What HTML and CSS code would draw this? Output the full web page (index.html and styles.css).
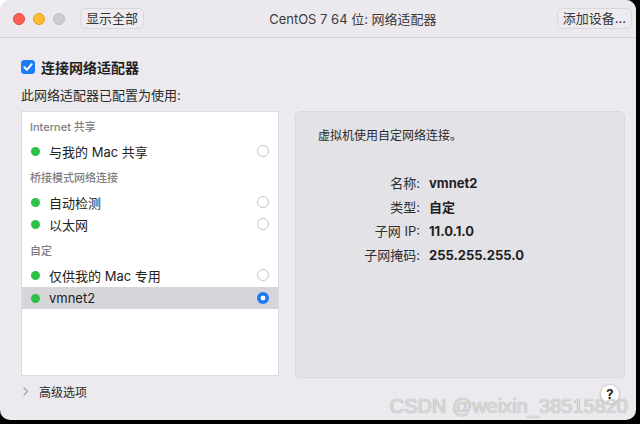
FILE: index.html
```html
<!DOCTYPE html>
<html lang="zh">
<head>
<meta charset="utf-8">
<title>CentOS 7 64 位: 网络适配器</title>
<link rel="stylesheet" href="styles.css">
</head>
<body>
<div class="window">
  <header class="titlebar">
    <div class="lights">
      <span class="light red"></span>
      <span class="light yellow"></span>
      <span class="light gray"></span>
    </div>
    <button class="tbtn">显示全部</button>
    <div class="title">CentOS 7 64 位: 网络适配器</div>
    <button class="tbtn">添加设备...</button>
  </header>
  <main class="content">
    <label class="connect">
      <svg class="check" width="14" height="14" viewBox="0 0 14 14"><rect x="0" y="0" width="14" height="14" rx="3.5" fill="#1B7CF5"/><path d="M3.4 7.3 L5.9 9.9 L10.7 4.2" fill="none" stroke="#fff" stroke-width="2" stroke-linecap="round" stroke-linejoin="round"/></svg>
      <span>连接网络适配器</span>
    </label>
    <div class="subtitle">此网络适配器已配置为使用:</div>
    <div class="panels">
      <div class="list">
        <div class="group">Internet 共享</div>
        <div class="row"><span class="dot"></span><span class="name">与我的 Mac 共享</span><span class="radio"></span></div>
        <div class="group">桥接模式网络连接</div>
        <div class="row"><span class="dot"></span><span class="name">自动检测</span><span class="radio"></span></div>
        <div class="row"><span class="dot"></span><span class="name">以太网</span><span class="radio"></span></div>
        <div class="group">自定</div>
        <div class="row"><span class="dot"></span><span class="name">仅供我的 Mac 专用</span><span class="radio"></span></div>
        <div class="row selected"><span class="dot"></span><span class="name">vmnet2</span><span class="radio on"></span></div>
      </div>
      <div class="detail">
        <p class="desc">虚拟机使用自定网络连接。</p>
        <dl class="kv">
          <dt>名称:</dt><dd>vmnet2</dd>
          <dt>类型:</dt><dd>自定</dd>
          <dt>子网 IP:</dt><dd>11.0.1.0</dd>
          <dt>子网掩码:</dt><dd>255.255.255.0</dd>
        </dl>
      </div>
    </div>
    <footer class="footer">
      <div class="adv">
        <svg class="chev" width="6" height="9" viewBox="0 0 6 9"><path d="M1 1 L4.5 4.5 L1 8" fill="none" stroke="#A3A2A6" stroke-width="1.2" stroke-linecap="round" stroke-linejoin="round"/></svg>
        <span>高级选项</span>
      </div>
      <button class="help">?</button>
    </footer>
  </main>
  <div class="watermark">CSDN @weixin_38515820</div>
</div>
</body>
</html>
```
FILE: styles.css
```css
html, body {
  margin: 0;
  padding: 0;
}
body {
  width: 640px;
  height: 424px;
  overflow: hidden;
  background: linear-gradient(135deg, #ffffff 0 8px, #000000 8px);
  font-family: "Inter", "Noto Sans CJK SC", sans-serif;
  color: #262626;
}
.window {
  position: relative;
  width: 636px;
  height: 420px;
  background: #ECEAEE;
  border-radius: 10px;
  overflow: hidden;
  display: flex;
  flex-direction: column;
}
.titlebar {
  height: 37px;
  border-bottom: 1px solid #D6D4D9;
  background: #EBE9ED;
  display: flex;
  align-items: center;
  padding: 0 4px 0 13px;
}
.lights {
  display: flex;
  gap: 8px;
  margin-right: 15px;
}
.light {
  width: 12px;
  height: 12px;
  border-radius: 50%;
  box-sizing: border-box;
}
.light.red { background: #FE5F57; border: 0.5px solid #E2463F; }
.light.yellow { background: #FEBC2E; border: 0.5px solid #E1A116; }
.light.gray { background: #CECCD1; border: 0.5px solid #BEBCC1; }
.tbtn {
  height: 21px;
  padding: 0 5px;
  font-family: inherit;
  font-size: 13px;
  line-height: 19px;
  color: #363636;
  background: #EDEBEF;
  border: 1px solid #DAD8DD;
  border-radius: 5px;
}
.title {
  flex: 1;
  text-align: center;
  padding-left: 5px;
  font-size: 13px;
  color: #3A3A3A;
}
.content {
  flex: 1;
  display: flex;
  flex-direction: column;
  padding: 0 11px 0 21px;
}
.connect {
  margin-top: 19px;
  height: 20px;
  display: flex;
  align-items: center;
  gap: 6px;
  font-size: 14px;
  font-weight: 600;
  color: #1F1F1F;
}
.subtitle {
  margin-top: 9px;
  font-size: 13px;
  line-height: 18px;
  color: #2A2A2A;
}
.panels {
  margin-top: 7px;
  height: 265px;
  display: flex;
  gap: 16px;
}
.list {
  width: 258px;
  box-sizing: border-box;
  background: #FFFFFF;
  border: 1px solid #DDDCE0;
}
.group {
  padding: 6px 8px 3px;
  line-height: 20px;
  font-size: 11px;
  font-weight: 500;
  color: #7E7D82;
}
.group:first-child {
  padding-top: 5px;
}
.row {
  height: 22px;
  display: flex;
  align-items: center;
  padding: 0 9px;
  font-size: 13px;
  color: #222;
}
.row.selected {
  margin-top: 1px;
  background: #D6D5D9;
}
.dot {
  width: 9px;
  height: 9px;
  border-radius: 50%;
  background: #2CC248;
  margin-right: 9px;
  flex: none;
}
.name {
  flex: 1;
}
.radio {
  width: 12px;
  height: 12px;
  box-sizing: border-box;
  border-radius: 50%;
  border: 1px solid #C6C5C9;
  background: #fff;
  flex: none;
}
.radio.on {
  border: none;
  background: radial-gradient(circle, #fff 0 2.2px, #1C7BF4 2.7px);
}
.detail {
  flex: 1;
  height: 267px;
  box-sizing: border-box;
  background: #E3E2E6;
  border: 1px solid #D9D8DC;
  border-radius: 5px;
  padding: 15px 22px;
}
.desc {
  margin: 0;
  font-size: 12px;
  line-height: 18px;
  color: #2A2A2A;
}
.kv {
  margin: 26px 0 0;
  display: grid;
  grid-template-columns: 102px auto;
  column-gap: 9px;
  font-size: 13px;
  line-height: 24px;
}
.kv dt {
  text-align: right;
  color: #2F2F2F;
}
.kv dd {
  margin: 0;
  font-weight: 700;
  color: #1F1F1F;
}
.footer {
  margin-top: 5px;
  height: 20px;
  display: flex;
  align-items: center;
}
.adv {
  display: flex;
  align-items: center;
  gap: 10px;
  padding-left: 2px;
  font-size: 12px;
  color: #2A2A2A;
}
.help {
  margin-left: auto;
  margin-right: 5px;
  margin-top: 6px;
  width: 20px;
  height: 20px;
  padding: 0;
  border: 0.5px solid #D2D1D5;
  border-radius: 50%;
  background: #FFFFFF;
  box-shadow: 0 0.5px 1.5px rgba(0, 0, 0, 0.25);
  font-family: inherit;
  font-size: 13px;
  font-weight: 700;
  line-height: 19px;
  color: #222;
}
.watermark {
  position: absolute;
  right: 8px;
  top: 396px;
  font-family: "Liberation Sans", sans-serif;
  font-size: 20px;
  line-height: 20px;
  color: #DCDCDC;
  text-shadow: 0 0 1px #8A8A8A;
  white-space: nowrap;
}
```
